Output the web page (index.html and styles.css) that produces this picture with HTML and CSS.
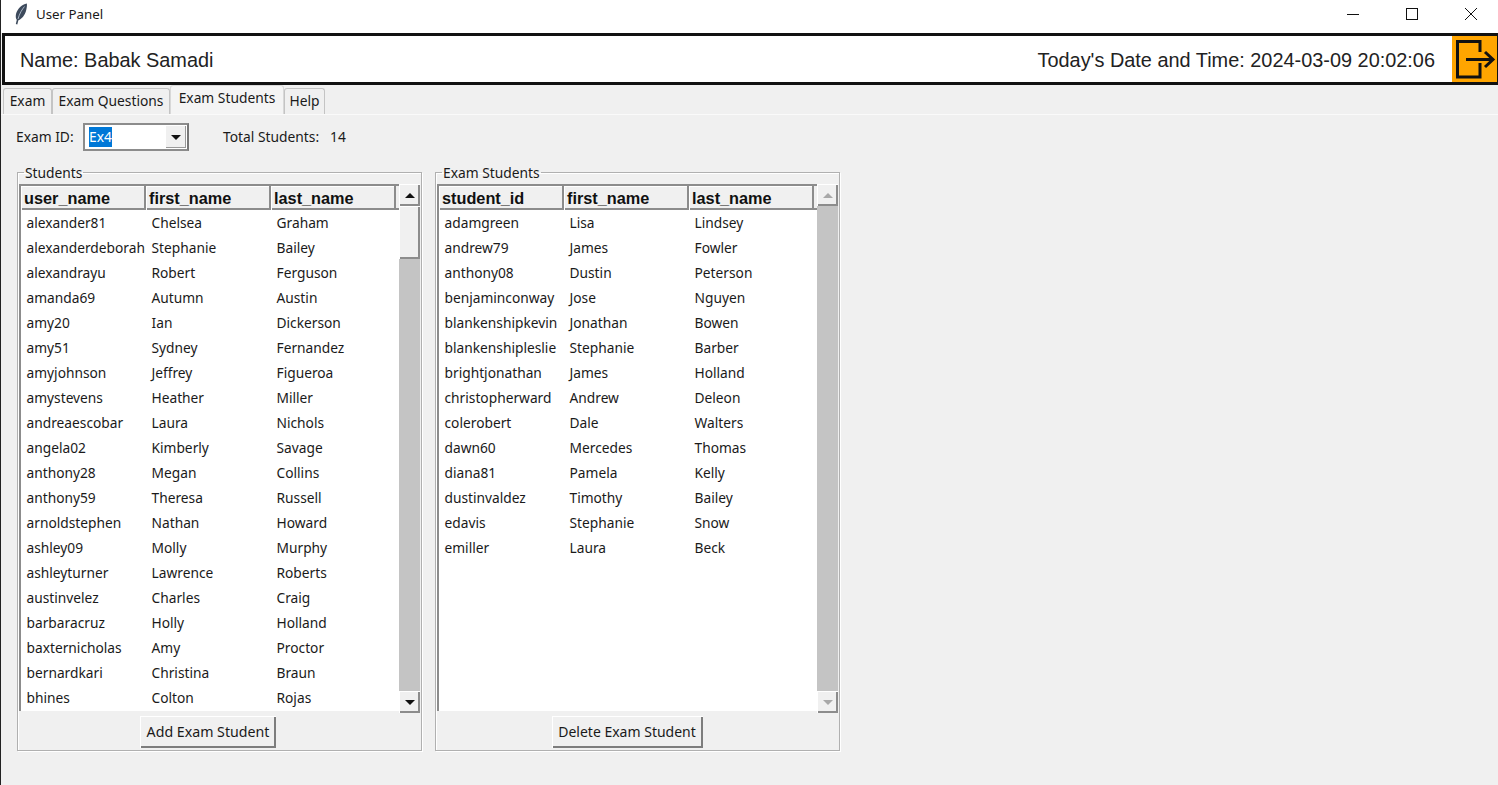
FILE: index.html
```html
<!DOCTYPE html>
<html lang="en">
  <head>
    <meta charset="UTF-8" />
    <meta name="viewport" content="width=device-width, initial-scale=1.0" />
    <title>User Panel</title>
    <link rel="stylesheet" href="styles.css">
  </head>
  <body>
    <div class="titlebar">
      <svg class="feather" width="14" height="22" viewBox="0 0 14 22">
        <path d="M12.800 0.500C8 1.500 3.500 5.500 2 11 1.400 13.800 2 16 2.800 16.800L1.800 21 3.300 21.500 4.400 17.300C8 16 10.800 12 12 8 12.800 5 13.200 2.300 12.800 0.500Z" fill="#3d4a5c"/>
        <path d="M10.500 3.500C8 6.500 5.500 10.500 4 16" stroke="#a9b6c6" fill="none"/>
      </svg>
      <span class="titlebar-text">User Panel</span>
      <div class="window-buttons">
        <div class="window-button">
          <svg width="14" height="14" viewBox="0 0 14 14"><path d="M1 7.500H13" stroke="#111" fill="none"/></svg>
        </div>
        <div class="window-button">
          <svg width="14" height="14" viewBox="0 0 14 14"><rect x="1.500" y="1.500" width="11" height="11" stroke="#111" fill="none"/></svg>
        </div>
        <div class="window-button">
          <svg width="14" height="14" viewBox="0 0 14 14"><path d="M1 1L13 13M13 1L1 13" stroke="#111" fill="none"/></svg>
        </div>
      </div>
    </div>

    <div class="header">
      <span class="user-name">Name: Babak Samadi</span>
      <span class="date-time">Today's Date and Time: 2024-03-09 20:02:06</span>
      <div class="logout">
        <svg width="45" height="47" viewBox="0 0 45 47">
          <path d="M28 16V5.500H5.500V41H28V27" stroke="#111" stroke-width="3" fill="none"/>
          <path d="M14 23.500H41M33 16L41 23.500L33 31" stroke="#111" stroke-width="3" fill="none"/>
        </svg>
      </div>
    </div>

    <div class="tabs">
      <div class="tab tab-exam">Exam</div>
      <div class="tab tab-questions">Exam Questions</div>
      <div class="tab tab-students active">Exam Students</div>
      <div class="tab tab-help">Help</div>
    </div>

    <div class="panel">
      <div class="toolbar">
        <label class="exam-label">Exam ID:</label>
        <div class="combo">
          <div class="combo-field"><span class="combo-value">Ex4</span></div>
          <div class="combo-arrow"><span class="arrow-down"></span></div>
        </div>
        <span class="total-label">Total Students:</span>
        <span class="total-value">14</span>
      </div>

      <div class="groups">
        <fieldset class="group">
          <legend>Students</legend>
          <div class="tree-wrap">
            <div class="tree">
              <div class="tree-head">
                <div>user_name</div><div>first_name</div><div>last_name</div>
              </div>
              <div class="row"><span>alexander81</span><span>Chelsea</span><span>Graham</span></div>
              <div class="row"><span>alexanderdeborah</span><span>Stephanie</span><span>Bailey</span></div>
              <div class="row"><span>alexandrayu</span><span>Robert</span><span>Ferguson</span></div>
              <div class="row"><span>amanda69</span><span>Autumn</span><span>Austin</span></div>
              <div class="row"><span>amy20</span><span>Ian</span><span>Dickerson</span></div>
              <div class="row"><span>amy51</span><span>Sydney</span><span>Fernandez</span></div>
              <div class="row"><span>amyjohnson</span><span>Jeffrey</span><span>Figueroa</span></div>
              <div class="row"><span>amystevens</span><span>Heather</span><span>Miller</span></div>
              <div class="row"><span>andreaescobar</span><span>Laura</span><span>Nichols</span></div>
              <div class="row"><span>angela02</span><span>Kimberly</span><span>Savage</span></div>
              <div class="row"><span>anthony28</span><span>Megan</span><span>Collins</span></div>
              <div class="row"><span>anthony59</span><span>Theresa</span><span>Russell</span></div>
              <div class="row"><span>arnoldstephen</span><span>Nathan</span><span>Howard</span></div>
              <div class="row"><span>ashley09</span><span>Molly</span><span>Murphy</span></div>
              <div class="row"><span>ashleyturner</span><span>Lawrence</span><span>Roberts</span></div>
              <div class="row"><span>austinvelez</span><span>Charles</span><span>Craig</span></div>
              <div class="row"><span>barbaracruz</span><span>Holly</span><span>Holland</span></div>
              <div class="row"><span>baxternicholas</span><span>Amy</span><span>Proctor</span></div>
              <div class="row"><span>bernardkari</span><span>Christina</span><span>Braun</span></div>
              <div class="row"><span>bhines</span><span>Colton</span><span>Rojas</span></div>
            </div>
            <div class="scrollbar">
              <div class="scroll-btn"><span class="arrow-up"></span></div>
              <div class="scroll-track"><div class="scroll-thumb"></div></div>
              <div class="scroll-btn"><span class="arrow-down"></span></div>
            </div>
          </div>
          <div class="group-actions"><button class="btn-add">Add Exam Student</button></div>
        </fieldset>

        <fieldset class="group">
          <legend>Exam Students</legend>
          <div class="tree-wrap">
            <div class="tree">
              <div class="tree-head">
                <div>student_id</div><div>first_name</div><div>last_name</div>
              </div>
              <div class="row"><span>adamgreen</span><span>Lisa</span><span>Lindsey</span></div>
              <div class="row"><span>andrew79</span><span>James</span><span>Fowler</span></div>
              <div class="row"><span>anthony08</span><span>Dustin</span><span>Peterson</span></div>
              <div class="row"><span>benjaminconway</span><span>Jose</span><span>Nguyen</span></div>
              <div class="row"><span>blankenshipkevin</span><span>Jonathan</span><span>Bowen</span></div>
              <div class="row"><span>blankenshipleslie</span><span>Stephanie</span><span>Barber</span></div>
              <div class="row"><span>brightjonathan</span><span>James</span><span>Holland</span></div>
              <div class="row"><span>christopherward</span><span>Andrew</span><span>Deleon</span></div>
              <div class="row"><span>colerobert</span><span>Dale</span><span>Walters</span></div>
              <div class="row"><span>dawn60</span><span>Mercedes</span><span>Thomas</span></div>
              <div class="row"><span>diana81</span><span>Pamela</span><span>Kelly</span></div>
              <div class="row"><span>dustinvaldez</span><span>Timothy</span><span>Bailey</span></div>
              <div class="row"><span>edavis</span><span>Stephanie</span><span>Snow</span></div>
              <div class="row"><span>emiller</span><span>Laura</span><span>Beck</span></div>
            </div>
            <div class="scrollbar disabled">
              <div class="scroll-btn"><span class="arrow-up"></span></div>
              <div class="scroll-track"></div>
              <div class="scroll-btn"><span class="arrow-down"></span></div>
            </div>
          </div>
          <div class="group-actions"><button class="btn-delete">Delete Exam Student</button></div>
        </fieldset>
      </div>
    </div>
  </body>
</html>
```

FILE: styles.css
```css
* {
  box-sizing: border-box;
}

html,
body {
  height: 100%;
}

body {
  margin: 0;
  overflow: hidden;
  background-color: #f0f0f0;
  border-left: 1px solid #222;
  font-family: "Noto Sans", "Open Sans", sans-serif;
  font-size: 13.800px;
  color: #1a1a1a;
}

.titlebar {
  display: flex;
  align-items: center;
  height: 33px;
  margin-left: -1px;
  padding-left: 14px;
  padding-bottom: 6px;
  background: #fff;
}

.feather {
  margin-right: 8px;
}

.titlebar-text {
  font-size: 13.300px;
}

.window-buttons {
  display: flex;
  margin-left: auto;
  margin-right: -2px;
}

.window-button {
  display: flex;
  align-items: center;
  justify-content: center;
  width: 59px;
  height: 26px;
}

.header {
  display: flex;
  align-items: center;
  height: 52px;
  margin-left: 1px;
  border: 3px solid #111;
  border-right-width: 1px;
  background: #fff;
  font-family: "Liberation Sans", Arial, sans-serif;
  font-size: 19.900px;
  color: #222;
}

.user-name {
  margin-left: 15px;
  padding-top: 2px;
}

.date-time {
  margin-left: auto;
  margin-right: 17px;
  padding-top: 2px;
}

.logout {
  width: 45px;
  height: 46px;
  background: #ffa500;
}

.logout svg {
  display: block;
}

.tabs {
  display: flex;
  align-items: flex-end;
  height: 29px;
  padding-left: 2px;
}

.tab {
  display: flex;
  align-items: center;
  justify-content: center;
  height: 26px;
  padding-bottom: 2px;
  background: #f0f0f0;
  border: 1px solid #c4c4c4;
  border-bottom: none;
  border-radius: 3px 3px 0 0;
}

.tab-exam {
  width: 49px;
}

.tab-questions {
  width: 118px;
}

.tab-students {
  width: 114px;
}

.tab-help {
  width: 41px;
}

.tab.active {
  height: 29px;
  padding-bottom: 5px;
  border-color: #d8d8d8;
  background: #f4f4f4;
}

.panel {
  height: 671px;
  padding: 8px 15px 0;
  border-top: 1px solid #fafafa;
}

.toolbar {
  display: flex;
  align-items: center;
  height: 28px;
}

.toolbar label,
.toolbar > span {
  margin-top: -2px;
}

.exam-label {
  width: 67px;
}

.combo {
  display: flex;
  width: 106px;
  height: 28px;
  padding: 1px;
  background: #fff;
  border: 2px solid #8c8c8c;
  border-right-color: #777;
}

.combo-field {
  flex: 1;
  padding-left: 3px;
  line-height: 22px;
}

.combo-value {
  display: inline-block;
  height: 20px;
  line-height: 19px;
  background: #0078d7;
  color: #fff;
}

.combo-arrow {
  display: flex;
  align-items: center;
  justify-content: center;
  width: 20px;
  background: #f0f0f0;
  box-shadow: inset -1px -1px 0 #9a9a9a;
}

.arrow-down,
.arrow-up {
  width: 0;
  height: 0;
  border-left: 5px solid transparent;
  border-right: 5px solid transparent;
}

.arrow-down {
  border-top: 5px solid #111;
}

.arrow-up {
  border-bottom: 5px solid #111;
}

.total-label {
  margin-left: 34px;
  width: 107px;
}

.groups {
  display: flex;
  gap: 13px;
  margin-top: 12px;
  margin-left: 1px;
}

.group {
  display: flex;
  flex-direction: column;
  width: 405px;
  height: 588px;
  margin: 0;
  padding: 0 1px;
  border: 1px solid #b0b0b0;
  box-shadow: 1px 1px 0 #fff, inset 1px 1px 0 #fff;
}

.group legend {
  margin-left: 5px;
  padding: 1px 1px 0;
  height: 18px;
  line-height: 18px;
}

.tree-wrap {
  display: flex;
  height: 529px;
  margin-top: 3px;
}

.tree {
  width: 380px;
  margin-bottom: 2px;
  background: #fff;
  border-left: 2px solid #8c8c8c;
  border-top: 2px solid #8c8c8c;
  overflow: hidden;
}

.tree-head {
  display: grid;
  grid-template-columns: 125px 125px 125px;
  height: 24px;
  border-bottom: 2px solid #8c8c8c;
  background: #f0f0f0;
  font-family: "Liberation Sans", Arial, sans-serif;
  font-size: 16.300px;
  font-weight: bold;
  color: #111;
}

.tree-head div {
  padding-left: 3px;
  line-height: 24px;
  border-right: 2px solid #8c8c8c;
  box-shadow: inset 1px 1px 0 #fff;
}

.row {
  display: grid;
  grid-template-columns: 125px 125px 125px;
  height: 25px;
  font-size: 13.750px;
  line-height: 25px;
}

.row span {
  padding-left: 5.500px;
  overflow: hidden;
  white-space: nowrap;
}

.scrollbar {
  display: flex;
  flex-direction: column;
  width: 21px;
  background: #c4c4c4;
}

.scroll-btn {
  display: flex;
  align-items: center;
  justify-content: center;
  flex: none;
  height: 22px;
  background: #f0f0f0;
  box-shadow: inset 1px 1px 0 #fff, inset -2px -2px 0 #8c8c8c;
}

.scroll-track {
  flex: 1;
}

.scroll-thumb {
  height: 53px;
  background: #f0f0f0;
  box-shadow: inset 1px 1px 0 #fff, inset -2px -2px 0 #8c8c8c;
}

.scrollbar.disabled .arrow-up {
  border-bottom-color: #a8a8a8;
}

.scrollbar.disabled .arrow-down {
  border-top-color: #a8a8a8;
}

.group-actions {
  display: flex;
  justify-content: center;
  padding-top: 3px;
}

button {
  height: 32px;
  padding: 0 0 2px;
  background: #f0f0f0;
  border: none;
  box-shadow: inset 1px 1px 0 #fff, inset -2px -2px 0 #7d7d7d, inset 0 0 0 1px #d0d0d0;
  font-family: inherit;
  font-size: 14.200px;
  color: #1a1a1a;
}

.btn-add {
  width: 136px;
  margin-left: -23px;
}

.btn-delete {
  width: 151px;
  margin-left: -21px;
  font-size: 14px;
}
```
